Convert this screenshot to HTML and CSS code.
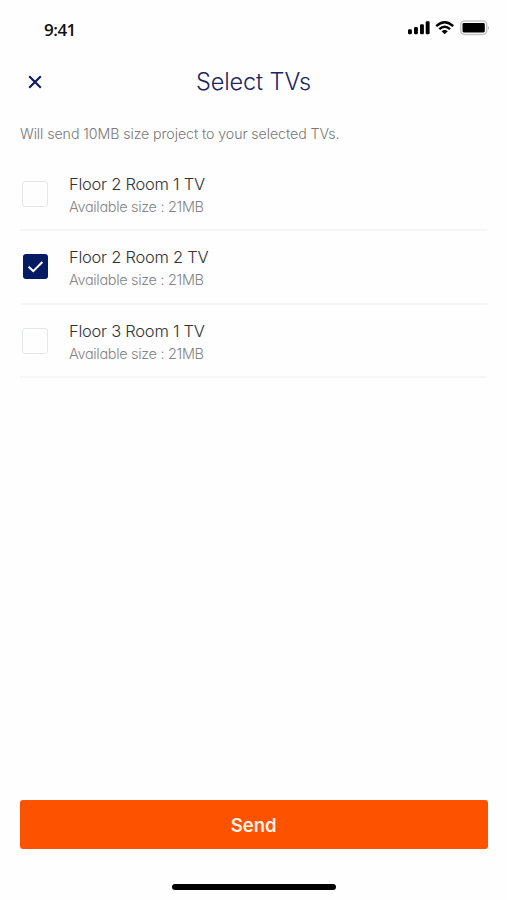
FILE: index.html
```html
<!DOCTYPE html>
<html lang="en">
<head>
<meta charset="utf-8">
<title>Select TVs</title>
<link rel="stylesheet" href="styles.css">
</head>
<body>
<div class="screen">
  <div class="status">
    <span class="time">9:41</span>
    <svg class="indicators" width="82" height="16" viewBox="0 0 82 16">
      <g fill="#000">
        <rect x="0" y="9.2" width="3.9" height="5" rx="1.2"/>
        <rect x="6" y="7" width="3.9" height="7.2" rx="1.2"/>
        <rect x="12" y="4.3" width="3.9" height="9.9" rx="1.2"/>
        <rect x="17.7" y="1.3" width="3.9" height="12.9" rx="1.2"/>
      </g>
      <g fill="none" stroke="#000" stroke-width="2.4">
        <path d="M28.2 6.2Q36.7 -1.8 45.2 6.2"/>
        <path d="M31.3 9.2Q36.7 4.3 42.1 9.2"/>
      </g>
      <path d="M33.6 11.2Q36.7 8.7 39.8 11.2L36.7 14.3Z"/>
      <rect x="52.7" y="1" width="26" height="13.4" rx="3.8" fill="#fff" stroke="#c6c6c6" stroke-width="1.5"/>
      <rect x="54.5" y="3" width="22.3" height="9.5" rx="1.4"/>
      <path d="M80.2 5.7Q82 7.7 80.2 9.7Z" fill="#aaa"/>
    </svg>
  </div>
  <header class="header">
    <button class="close" aria-label="Close">
      <svg width="14" height="14" viewBox="0 0 14 14"><path d="M1.2 1.2 12.8 12.8M12.8 1.2 1.2 12.8" fill="none" stroke="#0a1a5c" stroke-width="2.1"/></svg>
    </button>
    <h1 class="title">Select TVs</h1>
  </header>
  <p class="note">Will send 10MB size project to your selected TVs.</p>
  <ul class="list">
    <li class="item">
      <span class="box"></span>
      <div class="info"><div class="name">Floor 2 Room 1 TV</div><div class="size">Available size : 21MB</div></div>
    </li>
    <li class="item">
      <span class="box checked"><svg width="25" height="25" viewBox="0 0 25 25"><path d="M5.6 12.7 10.3 17.1 19.4 8" fill="none" stroke="#fff" stroke-width="2"/></svg></span>
      <div class="info"><div class="name">Floor 2 Room 2 TV</div><div class="size">Available size : 21MB</div></div>
    </li>
    <li class="item">
      <span class="box"></span>
      <div class="info"><div class="name">Floor 3 Room 1 TV</div><div class="size">Available size : 21MB</div></div>
    </li>
  </ul>
  <button class="send">Send</button>
  <div class="home"></div>
</div>
</body>
</html>
```
FILE: styles.css
```css
* { box-sizing: border-box; }
body {
  margin: 0;
  background: #fefefe;
  font-family: Inter, "Liberation Sans", sans-serif;
  font-feature-settings: "cv11";
}
button { border: 0; padding: 0; background: none; font: inherit; font-feature-settings: inherit; }
.screen { width: 507px; height: 900px; padding: 0 20px; display: flex; flex-direction: column; }
.status { height: 60px; padding: 20px 0 0 24px; display: flex; justify-content: space-between; align-items: flex-start; }
.time { font-family: "Open Sans", sans-serif; font-size: 17px; font-weight: 600; line-height: 20px; letter-spacing: -0.5px; color: #111; }
.indicators { margin-right: -3px; }
.header { height: 44px; display: grid; grid-template-columns: 30px 1fr 30px; align-items: center; }
.close { display: flex; justify-content: center; }
.title { margin: 0; text-align: center; font-size: 23.5px; font-weight: 300; line-height: 30px; letter-spacing: -0.1px; color: #1c2560; }
.note { margin: 20px 0 0; font-size: 14.2px; line-height: 20px; height: 20px; font-weight: 300; letter-spacing: -0.08px; color: #777; white-space: nowrap; }
.list { list-style: none; margin: 14px 0 0; padding: 0; width: 467px; }
.item { height: 73.3px; display: flex; align-items: flex-start; border-bottom: 2px solid #f6f6f6; padding: 16px 0 0 2px; }
.box { width: 26px; height: 26px; margin-top: 7px; border: 1.5px solid #e4e7ea; border-radius: 3px; flex: none; }
.checked { background: #031b62; border: 0; width: 25px; height: 25px; margin-left: 1px; }
.checked svg { display: block; }
.info { margin-left: 21px; white-space: nowrap; }
.name { font-size: 16.5px; line-height: 21px; font-weight: 300; letter-spacing: -0.25px; color: #333; }
.size { margin-top: 2px; font-size: 14.5px; line-height: 20px; font-weight: 300; letter-spacing: -0.33px; color: #858585; }
.send { margin-top: auto; width: 467.5px; height: 49px; background: #fd5200; border-radius: 3px; color: #fff3e8; font-size: 18.5px; font-weight: 600; flex: none; }
.home { width: 164px; height: 6px; margin: 35px auto 10px; border-radius: 3px; background: #000; flex: none; }
```
